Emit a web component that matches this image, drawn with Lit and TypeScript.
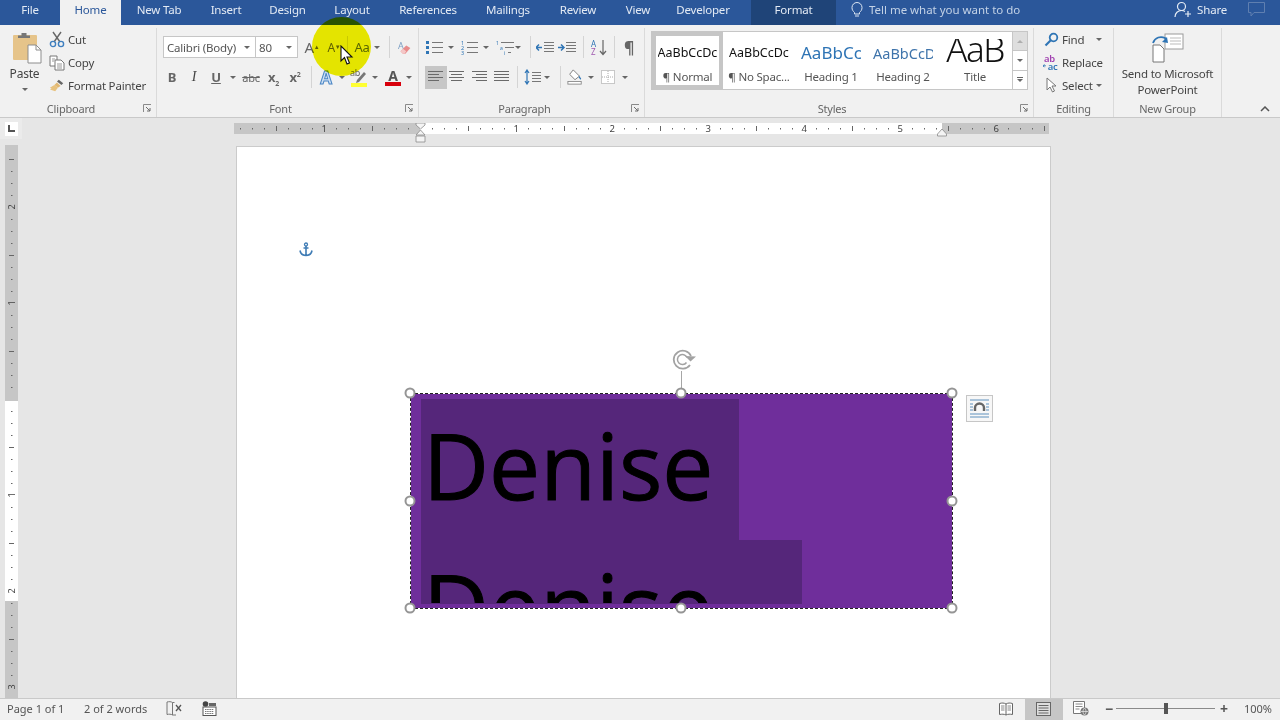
import { LitElement, html, svg, css } from "lit";
import { customElement } from "lit/decorators.js";

const c = (w: number, content: unknown = "") =>
  html`<span class="cell" style="width:${w}px">${content}</span>`;
const arrow = html`<i class="arrow"></i>`;
const sep = html`<i class="sep"></i>`;

const lines = (rows: [number, number][], color = "#6a6a6a") => html`<svg width="16" height="14" viewBox="0 0 16 14">
  ${rows.map(
    ([x, w], i) => svg`<rect x=${x} y=${1 + i * 3} width=${w} height="1" fill=${color}></rect>`
  )}</svg>`;

const launcher = html`<svg class="launcher" width="9" height="9" viewBox="0 0 9 9"><path d="M.5 8V.5H8" fill="none" stroke="#8a8a8a"/><path d="M3 3l4 4M7 4v3H4" fill="none" stroke="#6d6d6d"/></svg>`;

const paste = html`<svg class="pasteic" width="30" height="31" viewBox="0 0 30 31">
  <rect x="1" y="2" width="24" height="25" rx="1" fill="#e6c48a"/>
  <path d="M6 5V2.500h3.500V0h5v2.500H18V5z" fill="#777"/>
  <path d="M16 12h8l5 5v13H16z" fill="#fff" stroke="#8d8d8d"/>
  <path d="M24 12v5h5" fill="none" stroke="#8d8d8d"/></svg>`;
const scissors = html`<svg width="16" height="17" viewBox="0 0 16 17"><path d="M4 1l7 10M12 1L5 11" stroke="#666" stroke-width="1.400" fill="none"/><circle cx="4" cy="13" r="2.600" fill="none" stroke="#3f7fbf" stroke-width="1.400"/><circle cx="12" cy="13" r="2.600" fill="none" stroke="#3f7fbf" stroke-width="1.400"/></svg>`;
const copy = html`<svg width="16" height="16" viewBox="0 0 16 16"><path d="M1 1h7v10H1z" fill="#fff" stroke="#777"/><path d="M6 5h6l3 3v7H6z" fill="#fff" stroke="#777"/><path d="M8 9h5M8 11h5M8 13h5M3 4h3M3 6h2" stroke="#999"/></svg>`;
const painter = html`<svg width="18" height="16" viewBox="0 0 18 16"><path d="M11 1l5 4-2 2-5-4z" fill="#666"/><path d="M9 4l4 4-3 2-4-3z" fill="#e2b872"/><path d="M6 7l4 3-3 4-6-2 2-1-2-1z" fill="#e8c27e"/></svg>`;
const eraser = html`<svg width="17" height="17" viewBox="0 0 17 17"><text x="0" y="10" font-size="11" fill="#7d9fc4" font-family="Noto Sans">A</text><path d="M3 13l7-7 5 3-6 7H6z" fill="#e88b8b"/><path d="M3 13l3-3 4 3-2 3H6z" fill="#f4c7c7"/></svg>`;
const highlighter = html`<svg width="18" height="19" viewBox="0 0 18 19"><text x="0" y="8" font-size="9" fill="#666" font-family="Noto Sans">ab</text><path d="M7 12l7-8 2 2-7 8-3 1z" fill="#777"/><rect x="1" y="15" width="16" height="4" fill="#ffff33"/></svg>`;
const bullets = html`<svg width="18" height="14" viewBox="0 0 18 14"><g fill="#2f75b5"><rect y="1" width="3" height="3"/><rect y="6" width="3" height="3"/><rect y="11" width="3" height="3"/></g><path d="M6 2.500h11M6 7.500h11M6 12.500h11" stroke="#777"/></svg>`;
const numbering = html`<svg width="18" height="15" viewBox="0 0 18 15"><g fill="#2f75b5" font-size="5.500" font-family="Noto Sans"><text y="5">1</text><text y="10">2</text><text y="15">3</text></g><path d="M6 2.500h11M6 7.500h11M6 12.500h11" stroke="#777"/></svg>`;
const multi = html`<svg width="19" height="15" viewBox="0 0 19 15"><g fill="#2f75b5" font-size="5" font-family="Noto Sans"><text y="5">1</text><text x="4" y="10">a</text><text x="8" y="15">i</text></g><path d="M5 2.500h13M9 7.500h9M12 12.500h3" stroke="#777"/></svg>`;
const indentL = html`<svg width="18" height="13" viewBox="0 0 18 13"><path d="M0 6.500h6M3 3.500l-3 3 3 3" stroke="#2f75b5" stroke-width="1.500" fill="none"/><path d="M8 1.500h10M8 4.500h10M8 7.500h10M8 10.500h10" stroke="#777"/></svg>`;
const indentR = html`<svg width="18" height="13" viewBox="0 0 18 13"><path d="M0 6.500h6M3 3.500l3 3-3 3" stroke="#2f75b5" stroke-width="1.500" fill="none"/><path d="M8 1.500h10M8 4.500h10M8 7.500h10M8 10.500h10" stroke="#777"/></svg>`;
const sort = html`<svg width="16" height="17" viewBox="0 0 16 17"><text x="0" y="7.500" font-size="8" fill="#2f75b5" font-family="Noto Sans">A</text><text x="0" y="16" font-size="8" fill="#a05ab0" font-family="Noto Sans">Z</text><path d="M12 1v14M9 12l3 3.500 3-3.500" stroke="#666" stroke-width="1.200" fill="none"/></svg>`;
const spacing = html`<svg width="17" height="16" viewBox="0 0 17 16"><path d="M3 1v14M1 4l2-3 2 3M1 12l2 3 2-3" stroke="#2f75b5" stroke-width="1.200" fill="none"/><path d="M8 3.500h9M8 6.500h9M8 9.500h9M8 12.500h9" stroke="#777"/></svg>`;
const bucket = html`<svg width="18" height="18" viewBox="0 0 18 18"><path d="M7 1l7 7-5 4-6-6z" fill="#fff" stroke="#777"/><path d="M14 8l2 3-1 1-2-3z" fill="#2f75b5"/><rect x="1" y="14" width="15" height="3" fill="#fff" stroke="#888"/></svg>`;
const borders = html`<svg width="14" height="14" viewBox="0 0 14 14"><rect x=".5" y=".5" width="13" height="13" fill="#fff" stroke="#999" stroke-dasharray="1 1"/><path d="M7 1v12M1 7h12" stroke="#aaa" stroke-dasharray="1 1"/></svg>`;
const find = html`<svg width="15" height="15" viewBox="0 0 15 15"><circle cx="9.500" cy="5.500" r="3.800" fill="none" stroke="#2f75b5" stroke-width="1.800"/><path d="M7 8l-5.500 5.500" stroke="#2f75b5" stroke-width="2.200"/></svg>`;
const replace = html`<svg width="17" height="17" viewBox="0 0 17 17"><text x="1" y="7.500" font-size="10" font-weight="600" fill="#a040b0" font-family="Noto Sans">ab</text><text x="5" y="16" font-size="10" font-weight="600" fill="#2f75b5" font-family="Noto Sans">ac</text><path d="M0 12h3M1.500 10.500L0 12l1.500 1.500" stroke="#2f75b5" fill="none"/></svg>`;
const selectIc = html`<svg width="13" height="17" viewBox="0 0 13 17"><path d="M2 1v12l3-3 2.500 5 2-1-2.500-5h4z" fill="#fff" stroke="#777"/></svg>`;
const sendPpt = html`<svg width="32" height="30" viewBox="0 0 32 30"><rect x="13" y="1" width="18" height="15" fill="#fff" stroke="#9a9a9a"/><path d="M18 5h11M18 8h11M18 11h11" stroke="#bbb"/><path d="M1 12h7l4 4v13H1z" fill="#fff" stroke="#777"/><path d="M1 10C3 4 9 3 13 5l1 1" fill="none" stroke="#2f75b5" stroke-width="1.800"/><path d="M10 9l6 1-1-6z" fill="#2f75b5"/></svg>`;

const bulb = html`<svg width="12" height="16" viewBox="0 0 12 16"><path d="M3.500 10.500C2 9 1 8 1 5.500a5 5 0 0 1 10 0C11 8 10 9 8.500 10.500V12h-5z" fill="none" stroke="#dce6f2"/><path d="M4 14h4" stroke="#dce6f2"/></svg>`;
const person = html`<svg width="18" height="17" viewBox="0 0 18 17"><circle cx="7.500" cy="5.500" r="4" fill="none" stroke="#e6edf6" stroke-width="1.200"/><path d="M1 16c0-4 3-6.500 6.500-6.500 1.500 0 2.500.3 3.500 1" fill="none" stroke="#e6edf6" stroke-width="1.200"/><path d="M14 10v6M11 13h6" stroke="#e6edf6" stroke-width="1.200"/></svg>`;
const comment = html`<svg width="17" height="15" viewBox="0 0 17 15"><path d="M.5.500h16v10H6L3 14v-3.500H.5z" fill="none" stroke="#5f7fb0"/></svg>`;

const readIc = html`<svg width="14" height="14" viewBox="0 0 14 14"><path d="M7 2C5 .8 3 .8 .5 1.500v11C3 12 5 12 7 13c2-1 4-1 6.500-.5v-11C11 .8 9 .8 7 2zM7 2v11" fill="#fff" stroke="#666"/><path d="M2 4h3.500M2 6h3.500M2 8h3.500M8.500 4H12M8.500 6H12M8.500 8H12" stroke="#888"/></svg>`;
const printIc = html`<svg width="15" height="14" viewBox="0 0 15 14"><rect x=".5" y=".5" width="14" height="13" fill="#ddd" stroke="#666"/><path d="M2.500 3.500h10M2.500 6h10M2.500 8.500h10M2.500 11h10" stroke="#666"/></svg>`;
const webIc = html`<svg width="16" height="15" viewBox="0 0 16 15"><path d="M.5.500h11v12H.5z" fill="#fff" stroke="#777"/><path d="M2.500 3h7M2.500 5.500h7M2.500 8h4" stroke="#888"/><circle cx="11.500" cy="10.500" r="4" fill="#777"/><path d="M8 10.500h7M11.500 7c-2 2-2 5 0 7M11.500 7c2 2 2 5 0 7" stroke="#eee" stroke-width=".7" fill="none"/></svg>`;
const proof = html`<svg width="16" height="15" viewBox="0 0 16 15"><path d="M1 1c2-.5 4-.5 5.500.5V14C5 13 3 13 1 13.500zM6.500 1.500h2" fill="none" stroke="#777"/><path d="M10 4l5 6M15 4l-5 6" stroke="#555" stroke-width="1.300"/><path d="M6.500 14H10" stroke="#777"/></svg>`;
const macro = html`<svg width="15" height="15" viewBox="0 0 15 15"><circle cx="3.500" cy="3" r="2.800" fill="#444"/><rect x="1" y="6" width="13" height="8.500" fill="#fff" stroke="#555"/><path d="M3 8.500h9M3 10.500h9M3 12.500h9" stroke="#777" stroke-dasharray="1.500 .7"/><rect x="7" y="2" width="7" height="3" fill="#666"/></svg>`;

const TABS: [string, number][] = [
  ["File", 60], ["Home", 61], ["New Tab", 76], ["Insert", 58], ["Design", 65], ["Layout", 64],
  ["References", 88], ["Mailings", 72], ["Review", 68], ["View", 52], ["Developer", 78],
];

const STYLES = [
  { t: "AaBbCcDc", l: "¶ Normal", k: "normal" },
  { t: "AaBbCcDc", l: "¶ No Spac...", k: "nospace" },
  { t: "AaBbCc", l: "Heading 1", k: "h1" },
  { t: "AaBbCcD", l: "Heading 2", k: "h2" },
  { t: "AaB", l: "Title", k: "title" },
];

@customElement("app-root")
export class AppRoot extends LitElement {
  static styles = css`
    :host { display: block; width: 1280px; height: 720px; overflow: hidden; font-family: "Noto Sans", "Open Sans", sans-serif; font-size: 11.5px; letter-spacing: -0.2px; color: #444; }
    .root { position: relative; width: 1280px; height: 720px; display: flex; flex-direction: column; background: #e6e6e6; overflow: hidden; filter: blur(0.3px); }

    .tabs { height: 25px; flex: none; background: #2b579a; display: flex; align-items: stretch; color: #e3eaf4; font-size: 11.5px; }
    .tab { display: flex; align-items: center; justify-content: center; padding-bottom: 6px; }
    .tab.active { background: #f1f1f1; color: #2b579a; }
    .format { width: 85px; margin-left: 9px; background: #1f4478; display: flex; align-items: center; justify-content: center; padding-bottom: 6px; }
    .tell { margin-left: 15px; display: flex; align-items: center; gap: 6px; color: #c3d2e6; padding-bottom: 6px; letter-spacing: -0.02px; }
    .spacer { flex: 1; }
    .share { display: flex; align-items: center; gap: 5px; padding-bottom: 6px; }
    .commentbox { display: flex; align-items: center; padding: 0 15px 6px 21px; }

    .ribbon { height: 93px; flex: none; background: #f1f1f1; border-bottom: 1px solid #c9c9c9; box-sizing: border-box; display: flex; }
    .group { position: relative; display: flex; flex-direction: column; border-right: 1px solid #dadada; margin: 3px 0 0; box-sizing: border-box; flex: none; }
    .gbody { flex: 1; min-height: 0; }
    .glabel { height: 17px; display: flex; align-items: center; justify-content: center; color: #666; font-size: 11px; flex: none; }
    .glabel.wl { padding-right: 14px; }
    .launcher { position: absolute; right: 4px; bottom: 4px; }

    .cell { display: inline-flex; flex: none; align-items: center; justify-content: center; }
    .arrow { display: inline-block; width: 0; height: 0; border-left: 3px solid transparent; border-right: 3px solid transparent; border-top: 3px solid #666; }
    .sep { display: inline-block; width: 1px; height: 22px; background: #d4d4d4; }
    .row { display: flex; align-items: center; height: 22px; }

    .clip { width: 157px; }
    .pastecol { width: 49px; display: flex; flex-direction: column; align-items: center; padding-top: 5px; flex: none; }
    .pasteic { margin-left: 5px; flex: none; }
    .pastecol .plabel { margin-top: 2px; color: #444; font-size: 12px; line-height: 16px; }
    .pastecol .arrow { margin-top: 6px; }
    .cliplist { display: flex; flex-direction: column; }
    .cliprow { height: 23px; display: flex; align-items: center; gap: 3px; }
    .cliprow .ic { width: 16px; display: flex; justify-content: center; }
    .clipwrap { display: flex; flex: 1; }

    .font { width: 262px; }
    .fbody { padding-top: 8px; display: flex; flex-direction: column; gap: 8px; }
    .selrow { padding-left: 6px; }
    .fselect { background: #fff; border: 1px solid #c6c6c6; box-sizing: border-box; height: 22px; display: flex; align-items: center; justify-content: space-between; padding: 0 5px 0 3px; color: #555; font-size: 11.5px; }
    .fselect + .fselect { border-left: none; }
    .ta { color: #666; font-size: 13px; font-weight: 700; }
    .big { color: #666; font-size: 15px; }
    .small { color: #666; font-size: 12px; }
    .caret { font-size: 6px; vertical-align: super; color: #666; line-height: 0; }
    .aa { color: #5d6b7d; font-size: 13px; }
    .i { font-style: italic; font-family: "Liberation Serif", serif; font-size: 14px; }
    .u { text-decoration: underline; }
    .strike { text-decoration: line-through; font-size: 11px; color: #666; }
    .sub { font-size: 7px; vertical-align: sub; line-height: 0; }
    .sup { font-size: 7px; vertical-align: super; line-height: 0; }
    .fxA { font-size: 17px; font-weight: 700; color: #cfe0f3; -webkit-text-stroke: 1px #4a86c5; }
    .stack { display: flex; flex-direction: column; align-items: center; line-height: 13px; }
    .fontred { width: 16px; height: 4px; background: #d8000c; }
    .redA { color: #555; font-weight: 700; font-size: 14px; }

    .para { width: 226px; }
    .selbox { background: #c6c6c6; height: 23px; display: inline-flex; align-items: center; justify-content: center; flex: none; }
    .pilcrow { font-size: 16px; font-weight: 700; color: #666; }

    .styles { width: 389px; }
    .gallery { margin: 3px 0 0 6px; width: 377px; height: 59px; border: 1px solid #c6c6c6; box-sizing: border-box; background: #fff; display: flex; }
    .style { width: 72px; height: 57px; flex: none; box-sizing: border-box; padding-top: 4px; display: flex; flex-direction: column; align-items: center; overflow: hidden; letter-spacing: 0; }
    .style.normal { border: 4px solid #c6c6c6; padding-top: 0; width: 71px; }
    .preview { height: 33px; display: flex; align-items: center; justify-content: flex-start; overflow: hidden; width: 60px; white-space: nowrap; color: #111; flex: none; font-size: 12.500px; }
    .preview.h1 { color: #2e74b5; font-size: 17px; }
    .preview.h2 { color: #3f74ab; font-size: 14.500px; }
    .preview.title { align-items: flex-start; justify-content: center; margin-top: 3px; height: 30px; width: 66px; font-size: 35px; letter-spacing: -1.5px; color: #111; font-weight: 300; }
    .preview.title span { display: block; margin-top: -8px; line-height: 35px; }
    .slabel { font-size: 11.500px; color: #555; line-height: 16px; white-space: nowrap; letter-spacing: -0.2px; }
    .scroll { width: 14px; margin-left: auto; border-left: 1px solid #c6c6c6; display: flex; flex-direction: column; flex: none; }
    .sb { flex: 1; display: flex; align-items: center; justify-content: center; border-bottom: 1px solid #c6c6c6; }
    .sb:last-child { border-bottom: none; }
    .sb.off { background: #dedede; }
    .more { display: flex; flex-direction: column; align-items: center; gap: 1px; }
    .more b { display: block; width: 6px; height: 1px; background: #666; }

    .editing { width: 80px; }
    .elist { padding: 0 0 0 9px; display: flex; flex-direction: column; }
    .erow { display: flex; align-items: center; height: 23px; gap: 3px; font-size: 11.5px; flex: none; }
    .erow .ic { width: 16px; display: flex; justify-content: center; flex: none; }
    .newg { width: 108px; }
    .ngbody { display: flex; flex-direction: column; align-items: center; padding-top: 5px; }
    .ngtext { text-align: center; font-size: 11.500px; line-height: 16px; color: #444; margin-top: 3px; white-space: nowrap; }
    .collapse { flex: 1; display: flex; align-items: flex-end; justify-content: flex-end; padding: 0 10px 5px 0; }

    .work { flex: 1; min-height: 0; display: grid; grid-template-columns: 234px 1fr; grid-template-rows: 27px 1fr; }
    .corner { width: 22px; height: 21px; background: #ebebeb; display: flex; align-items: center; padding-left: 5px; box-sizing: border-box; }
    .lbox { width: 13px; height: 14px; background: #fff; display: flex; align-items: center; justify-content: center; }
    .hruler { padding-top: 5px; line-height: 0; }
    .vruler { padding-left: 5px; line-height: 0; }
    .doc { padding: 2px 0 0 3px; overflow: hidden; }
    .page { position: relative; width: 813px; height: 551px; background: #fff; box-shadow: 0 0 0 1px #cbcbcb; }

    .anchor { position: absolute; left: 62px; top: 95px; }
    .shape { position: absolute; left: 174px; top: 247px; width: 541px; height: 214px; box-sizing: border-box; background: #6f2e9b; outline: 1px dashed #222; overflow: hidden; }
    .sel1 { position: absolute; left: 10px; top: 5px; width: 318px; height: 141px; background: #55267a; }
    .sel2 { position: absolute; left: 10px; top: 146px; width: 381px; height: 64px; background: #55267a; }
    .textclip { position: absolute; left: 10px; right: 0; top: 5px; height: 204px; overflow: hidden; }
    .denise { font-family: "Open Sans", sans-serif; font-size: 91px; line-height: 141px; letter-spacing: 0; color: #000; padding-left: 2px; margin-top: -4px; -webkit-text-stroke: 1px #000; }
    .handle { position: absolute; width: 11px; height: 11px; box-sizing: border-box; border: 2px solid #959595; background: #fff; border-radius: 50%; transform: translate(-50%, -50%); }
    .stem { position: absolute; left: 444px; top: 224px; width: 1px; height: 23px; background: #a6a6a6; }
    .rotate { position: absolute; left: 435px; top: 202px; }
    .layoutbtn { position: absolute; left: 729px; top: 248px; width: 27px; height: 27px; box-sizing: border-box; border: 1px solid #c6c6c6; background: #f7f7f7; display: flex; align-items: center; justify-content: center; }

    .status { height: 22px; flex: none; background: #f1f1f1; border-top: 1px solid #c9c9c9; box-sizing: border-box; display: flex; align-items: center; font-size: 11px; color: #555; letter-spacing: 0; }
    .status > span { flex: none; padding-bottom: 2px; box-sizing: border-box; }
    .status > span.fill { flex: 1; }
    .st1 { margin-left: 7px; width: 77px; }
    .st2 { width: 82px; }
    .st3 { width: 16px; display: flex; justify-content: center; }
    .st4 { width: 54px; display: flex; justify-content: center; }
    .view { align-self: stretch; display: flex; align-items: center; justify-content: center; }
    .view.on { background: #c6c6c6; }
    .zoomer { display: flex; align-items: center; margin-left: 3px; }
    .zm { width: 14px; text-align: center; font-weight: 700; color: #555; font-size: 14px; line-height: 14px; }
    .track { position: relative; width: 99px; height: 1px; background: #8a8a8a; }
    .plus { margin-left: 2px; }
    .thumb { position: absolute; left: 48px; top: -5px; width: 4px; height: 11px; background: #555; }
    .pct { margin-left: 13px; font-size: 11px; }

    .spot { position: absolute; left: 312px; top: 17px; width: 59px; height: 59px; border-radius: 50%; background: #f2f200; mix-blend-mode: multiply; }
    .cursor { position: absolute; left: 340px; top: 45px; }
  `;

  private hruler() {
    const ticks = [];
    const zero = 186;
    for (let i = -15; i <= 52; i++) {
      const x = zero + i * 12;
      if (x < 4 || x > 812) continue;
      const n = Math.abs(i);
      if (n % 8 === 0 && n !== 0) {
        ticks.push(svg`<text x=${x} y="9" font-size="9.500" text-anchor="middle" fill="#444" font-family="Noto Sans">${n / 8}</text>`);
      } else if (n % 4 === 0 && n !== 0) {
        ticks.push(svg`<rect x=${x} y="3" width="1" height="5" fill="#666"></rect>`);
      } else if (n !== 0) {
        ticks.push(svg`<rect x=${x} y="5" width="1" height="1.500" fill="#666"></rect>`);
      }
    }
    return html`<svg width="815" height="22" viewBox="0 0 815 22">
      <rect x="0" y="0" width="815" height="11" fill="#c6c6c6"></rect>
      <rect x="186" y="0" width="522" height="11" fill="#fff"></rect>
      ${ticks}
      <path d="M182 0h9v2l-4.500 4L182 2zM182 12l4.500-5 4.500 5zM182 13h9v6h-9z" fill="#f4f4f4" stroke="#8a8a8a" stroke-width=".8"></path>
      <path d="M703.500 11l4.500-5 4.500 5v2h-9z" fill="#f4f4f4" stroke="#8a8a8a" stroke-width=".8"></path>
    </svg>`;
  }

  private vruler() {
    const ticks = [];
    const zero = 254;
    for (let i = -20; i <= 24; i++) {
      const y = zero + i * 12;
      if (y < 2 || y > 552) continue;
      const n = Math.abs(i);
      if (n % 8 === 0 && n !== 0) {
        ticks.push(svg`<text transform="translate(10 ${y}) rotate(-90)" font-size="9" text-anchor="middle" fill="#444" font-family="Noto Sans">${n / 8}</text>`);
      } else if (n % 4 === 0 && n !== 0) {
        ticks.push(svg`<rect x="4" y=${y} width="5" height="1" fill="#666"></rect>`);
      } else if (n !== 0) {
        ticks.push(svg`<rect x="6" y=${y} width="1.500" height="1" fill="#666"></rect>`);
      }
    }
    return html`<svg width="13" height="553" viewBox="0 0 13 553">
      <rect x="0" y="0" width="13" height="553" fill="#c6c6c6"></rect>
      <rect x="0" y="256" width="13" height="200" fill="#fff"></rect>
      ${ticks}
    </svg>`;
  }

  render() {
    const handles: [number, number][] = [
      [172.5, 245.5], [443.5, 245.5], [714.5, 245.5], [172.5, 354], [714.5, 354], [172.5, 461], [443.5, 461], [714.5, 461],
    ];
    return html`<div class="root">
      <div class="tabs">
        ${TABS.map(([t, w], i) => html`<div class="tab ${i === 1 ? "active" : ""}" style="width:${w}px">${t}</div>`)}
        <div class="format">Format</div>
        <div class="tell">${bulb}<span>Tell me what you want to do</span></div>
        <div class="spacer"></div>
        <div class="share">${person}<span>Share</span></div>
        <div class="commentbox">${comment}</div>
      </div>

      <div class="ribbon">
        <section class="group clip">
          <div class="clipwrap">
            <div class="pastecol">
              ${paste}<span class="plabel">Paste</span>${arrow}
            </div>
            <div class="cliplist">
              <div class="cliprow"><span class="ic">${scissors}</span>Cut</div>
              <div class="cliprow"><span class="ic">${copy}</span>Copy</div>
              <div class="cliprow"><span class="ic">${painter}</span>Format Painter</div>
            </div>
          </div>
          <div class="glabel wl">Clipboard</div>${launcher}
        </section>

        <section class="group font">
          <div class="gbody fbody">
            <div class="row selrow">
              <span class="fselect" style="width:93px">Calibri (Body) ${arrow}</span>
              <span class="fselect" style="width:42px">80 ${arrow}</span>
              ${c(2)}${c(24, html`<span class="big">A</span><span class="caret">▲</span>`)}
              ${c(20, html`<span class="small">A</span><span class="caret">▼</span>`)}
              ${c(6, sep)}${c(24, html`<span class="aa">Aa</span>`)}${c(6, arrow)}
              ${c(18, sep)}${c(14, eraser)}
            </div>
            <div class="row">
              ${c(4)}${c(22, html`<span class="ta">B</span>`)}${c(22, html`<span class="i">I</span>`)}${c(22, html`<span class="ta u">U</span>`)}
              ${c(12, arrow)}${c(24, html`<span class="strike">abc</span>`)}
              ${c(21, html`<span class="ta">x<span class="sub">2</span></span>`)}${c(22, html`<span class="ta">x<span class="sup">2</span></span>`)}
              ${c(10, sep)}${c(20, html`<span class="fxA">A</span>`)}${c(12, arrow)}
              ${c(22, highlighter)}${c(10, arrow)}
              ${c(26, html`<span class="stack"><span class="redA">A</span><span class="fontred"></span></span>`)}${c(6, arrow)}
            </div>
          </div>
          <div class="glabel wl">Font</div>${launcher}
        </section>

        <section class="group para">
          <div class="gbody fbody">
            <div class="row">
              ${c(6)}${c(20, bullets)}${c(12, arrow)}${c(26, numbering)}${c(6, arrow)}${c(6)}${c(20, multi)}${c(6, arrow)}
              ${c(3)}${c(12, sep)}${c(18, indentL)}${c(26, indentR)}${c(6, sep)}${c(26, sort)}${c(4, sep)}${c(26, html`<span class="pilcrow">¶</span>`)}
            </div>
            <div class="row">
              ${c(6)}
              <span class="selbox" style="width:22px">${lines([[0, 15], [0, 11], [0, 15], [0, 11]])}</span>
              ${c(20, lines([[0, 15], [2, 11], [0, 15], [2, 11]]))}${c(26, lines([[0, 15], [4, 11], [0, 15], [4, 11]]))}${c(18, lines([[0, 15], [0, 15], [0, 15], [0, 15]]))}
              ${c(12, sep)}${c(18, spacing)}${c(12, arrow)}${c(14, sep)}${c(16, bucket)}${c(16, arrow)}${c(18, borders)}${c(16, arrow)}
            </div>
          </div>
          <div class="glabel wl">Paragraph</div>${launcher}
        </section>

        <section class="group styles">
          <div class="gbody">
            <div class="gallery">
              ${STYLES.map(
                (s) => html`<div class="style ${s.k}">
                  <div class="preview ${s.k}"><span>${s.t}</span></div>
                  <div class="slabel">${s.l}</div>
                </div>`
              )}
              <div class="scroll">
                <div class="sb off"><i class="arrow" style="transform:rotate(180deg);opacity:.4"></i></div>
                <div class="sb">${arrow}</div>
                <div class="sb"><span class="more"><b></b>${arrow}</span></div>
              </div>
            </div>
          </div>
          <div class="glabel wl">Styles</div>${launcher}
        </section>

        <section class="group editing">
          <div class="gbody elist">
            <div class="erow"><span class="ic">${find}</span>Find<i class="arrow" style="margin-left:9px"></i></div>
            <div class="erow"><span class="ic">${replace}</span>Replace</div>
            <div class="erow"><span class="ic">${selectIc}</span>Select${arrow}</div>
          </div>
          <div class="glabel">Editing</div>
        </section>

        <section class="group newg">
          <div class="gbody ngbody">${sendPpt}<div class="ngtext">Send to Microsoft<br />PowerPoint</div></div>
          <div class="glabel">New Group</div>
        </section>

        <div class="collapse"><svg width="10" height="6" viewBox="0 0 10 6"><path d="M1 5l4-4 4 4" fill="none" stroke="#555" stroke-width="1.500"></path></svg></div>
      </div>

      <div class="work">
        <div class="corner"><span class="lbox"><svg width="7" height="7" viewBox="0 0 7 7"><path d="M1 0v6h6" fill="none" stroke="#555" stroke-width="2"></path></svg></span></div>
        <div class="hruler">${this.hruler()}</div>
        <div class="vruler">${this.vruler()}</div>
        <div class="doc">
          <div class="page">
            <svg class="anchor" width="14" height="15" viewBox="0 0 14 15"><circle cx="7" cy="2.500" r="1.500" fill="none" stroke="#3f7cb5" stroke-width="1.300"></circle><path d="M7 4v9.500M4.500 6h5M1 8.500c.5 3 3 5 6 5s5.500-2 6-5" fill="none" stroke="#3f7cb5" stroke-width="1.600"></path></svg>
            <svg class="rotate" width="25" height="22" viewBox="0 0 25 22"><path d="M19 7a9 9 0 1 0-1 9" fill="none" stroke="#a2a2a2" stroke-width="1.800"></path><path d="M15 8.500a5 5 0 1 0 -.5 5" fill="none" stroke="#a2a2a2" stroke-width="1.500"></path><path d="M13 7l11 .5-5.500 5z" fill="#a2a2a2"></path></svg>
            <div class="stem"></div>
            <div class="shape">
              <div class="sel1"></div>
              <div class="sel2"></div>
              <div class="textclip"><div class="denise">Denise<br />Denise</div></div>
            </div>
            ${handles.map(([x, y]) => html`<div class="handle" style="left:${x}px;top:${y}px"></div>`)}
            <div class="layoutbtn"><svg width="21" height="19" viewBox="0 0 21 19"><path d="M1 1h19M1 18h19M1 15h19" stroke="#5e91bd"></path><path d="M1 5h3M1 8h3M1 11h3M17 5h3M17 8h3M17 11h3" stroke="#5e91bd"></path><path d="M6 12V9a4.500 4.500 0 0 1 9 0v3" fill="none" stroke="#666" stroke-width="2.400"></path></svg></div>
          </div>
        </div>
      </div>

      <div class="status">
        <span class="st1">Page 1 of 1</span>
        <span class="st2">2 of 2 words</span>
        <span class="st3">${proof}</span>
        <span class="st4">${macro}</span>
        <span class="fill"></span>
        <span class="view" style="width:38px">${readIc}</span>
        <span class="view on" style="width:38px">${printIc}</span>
        <span class="view" style="width:36px">${webIc}</span>
        <span class="zoomer"><span class="zm">−</span><span class="track"><i class="thumb"></i></span><span class="zm plus">+</span></span>
        <span class="pct">100%</span>
        <span style="width:8px"></span>
      </div>

      <div class="spot"></div>
      <svg class="cursor" width="14" height="21" viewBox="0 0 14 21"><path d="M1 1v15l3.500-3.500L7 19l2.500-1L7 12h5z" fill="#fff" stroke="#111" stroke-width="1.100"></path></svg>
    </div>`;
  }
}
